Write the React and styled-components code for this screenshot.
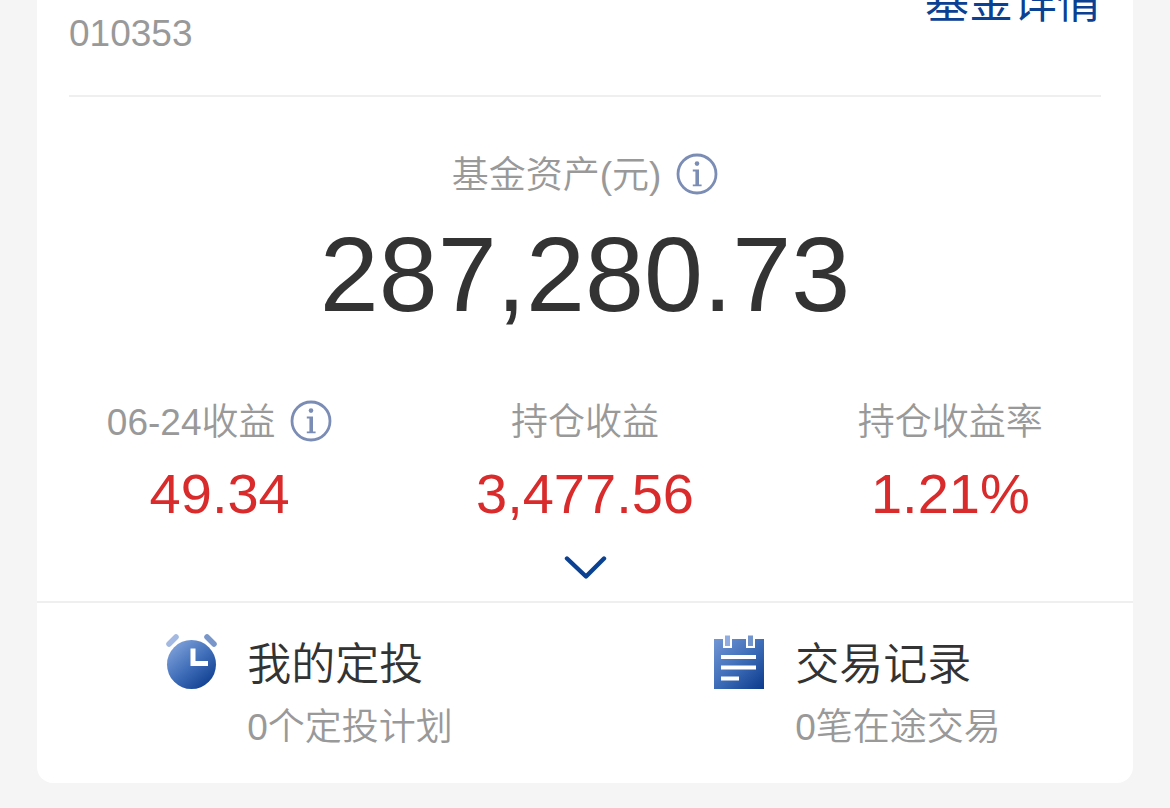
import styled, { createGlobalStyle } from "styled-components";

const GlobalStyle = createGlobalStyle`
  * {
    box-sizing: border-box;
  }

  body {
    margin: 0;
    background-color: #f5f5f5;
    color: #333333;
    font-family: "Liberation Sans", "Noto Sans CJK SC", sans-serif;
  }

  button {
    display: flex;
    padding: 0;
    border: none;
    background: none;
    cursor: pointer;
  }

  a {
    color: inherit;
    text-decoration: none;
  }
`;

const Page = styled.main`
  display: flow-root;
  overflow: hidden;
  padding: 0 37px 25px;
`;

// the card is scrolled a little, its first line is cut by the top edge
const Card = styled.section`
  margin-top: -22px;
  background-color: #ffffff;
  border-radius: 0 0 16px 16px;
`;

const Header = styled.header`
  display: flex;
  justify-content: space-between;
  margin: 0 32px;
  padding-bottom: 40px;
  border-bottom: 2px solid #efefef;
`;

const FundCode = styled.div`
  padding-top: 35px;
  font-size: 37px;
  line-height: 42px;
  color: #999999;
`;

const DetailLink = styled.a`
  font-size: 44px;
  line-height: 50px;
  color: #0b4192;
`;

const Asset = styled.div`
  display: flex;
  flex-direction: column;
  align-items: center;
  gap: 19px;
  padding-top: 56px;
`;

const Label = styled.div`
  display: flex;
  align-items: flex-start;
  justify-content: center;
  gap: 15px;
  font-size: 37px;
  font-weight: 350;
  line-height: 46px;
  color: #999999;
  white-space: nowrap;
`;

const Total = styled.div`
  font-size: 106px;
  line-height: 112px;
`;

const Stats = styled.div`
  display: grid;
  grid-template-columns: repeat(3, 1fr);
  padding-top: 70px;
`;

const Stat = styled.div`
  display: flex;
  flex-direction: column;
  gap: 16px;
  text-align: center;
`;

const StatValue = styled.div`
  font-size: 56px;
  line-height: 64px;
  color: #d92b2b;
`;

const Expand = styled.div`
  display: flex;
  justify-content: center;
  padding: 29px 0 21px;
`;

const Entries = styled.nav`
  display: grid;
  grid-template-columns: repeat(2, 1fr);
  border-top: 2px solid #efefef;
`;

const Entry = styled.a`
  display: flex;
  justify-content: center;
  gap: 30px;
  padding: 30px 4px 34px 0;
`;

const EntryText = styled.div`
  padding-top: 7px;
`;

const EntryTitle = styled.div`
  font-size: 44px;
  font-weight: 350;
  line-height: 50px;
`;

const EntryNote = styled.div`
  margin-top: 17px;
  font-size: 37px;
  font-weight: 350;
  line-height: 42px;
  color: #999999;
`;

const InfoButton = ({ label }) => (
  <button type="button" aria-label={label}>
    <svg width="42" height="42" viewBox="0 0 42 42" fill="none">
      <circle cx="21" cy="21" r="19" stroke="#7c8db5" strokeWidth="2.8" />
      <circle cx="21" cy="10.6" r="2.3" fill="#7c8db5" />
      <path
        d="M16.8 16.6H23V31.4H25.6V33.2H16.8V31.4H19.4V18.4H16.8Z"
        fill="#7c8db5"
      />
    </svg>
  </button>
);

const ClockIcon = () => (
  <svg width="52" height="58" viewBox="0 0 52 58" fill="none">
    <defs>
      <linearGradient id="clockFace" x1="8" y1="12" x2="42" y2="52" gradientUnits="userSpaceOnUse">
        <stop stopColor="#7d9fd8" />
        <stop offset="0.5" stopColor="#4270ba" />
        <stop offset="1" stopColor="#134294" />
      </linearGradient>
    </defs>
    <path d="M4 11L11 4" stroke="#a3b9e2" strokeWidth="5.5" strokeLinecap="round" />
    <path d="M42 4L49 11" stroke="#7896ca" strokeWidth="5.5" strokeLinecap="round" />
    <circle cx="26.5" cy="31.5" r="26.5" fill="#ffffff" />
    <circle cx="26.5" cy="31.5" r="24.5" fill="url(#clockFace)" />
    <path d="M28 15.5V30.5H43" stroke="#ffffff" strokeWidth="5" />
  </svg>
);

const RecordIcon = () => (
  <svg width="52" height="58" viewBox="0 0 52 58" fill="none">
    <defs>
      <linearGradient id="notePad" x1="2" y1="6" x2="50" y2="56" gradientUnits="userSpaceOnUse">
        <stop stopColor="#7196d4" />
        <stop offset="0.5" stopColor="#3e6db8" />
        <stop offset="1" stopColor="#0d3b8e" />
      </linearGradient>
    </defs>
    <path d="M1 6H51V56H1Z" fill="url(#notePad)" />
    <path d="M10 2H19V15H10ZM33 2H42V15H33Z" fill="#ffffff" />
    <path d="M12 2.5H17V13H12Z" fill="#91ace0" />
    <path d="M35 2.5H40V13H35Z" fill="#7294cd" />
    <path d="M8 24H43M8 34.5H43M8 45.5H26" stroke="#ffffff" strokeWidth="4" />
  </svg>
);

const App = () => {
  return (
    <>
      <GlobalStyle />
      <Page>
        <Card>
          <Header>
            <FundCode>010353</FundCode>
            <DetailLink href="#detail">基金详情</DetailLink>
          </Header>

          <Asset>
            <Label>
              基金资产(元)
              <InfoButton label="基金资产说明" />
            </Label>
            <Total>287,280.73</Total>
          </Asset>

          <Stats>
            <Stat>
              <Label>
                06-24收益
                <InfoButton label="收益说明" />
              </Label>
              <StatValue>49.34</StatValue>
            </Stat>
            <Stat>
              <Label>持仓收益</Label>
              <StatValue>3,477.56</StatValue>
            </Stat>
            <Stat>
              <Label>持仓收益率</Label>
              <StatValue>1.21%</StatValue>
            </Stat>
          </Stats>

          <Expand>
            <button type="button" aria-label="展开">
              <svg width="44" height="25" viewBox="0 0 44 25" fill="none">
                <path
                  d="M4 3.5L23 21.5L41 3.5"
                  stroke="#0b4192"
                  strokeWidth="4.4"
                  strokeLinecap="round"
                  strokeLinejoin="round"
                />
              </svg>
            </button>
          </Expand>

          <Entries>
            <Entry href="#plan">
              <ClockIcon />
              <EntryText>
                <EntryTitle>我的定投</EntryTitle>
                <EntryNote>0个定投计划</EntryNote>
              </EntryText>
            </Entry>
            <Entry href="#records">
              <RecordIcon />
              <EntryText>
                <EntryTitle>交易记录</EntryTitle>
                <EntryNote>0笔在途交易</EntryNote>
              </EntryText>
            </Entry>
          </Entries>
        </Card>
      </Page>
    </>
  );
};

export default App;
